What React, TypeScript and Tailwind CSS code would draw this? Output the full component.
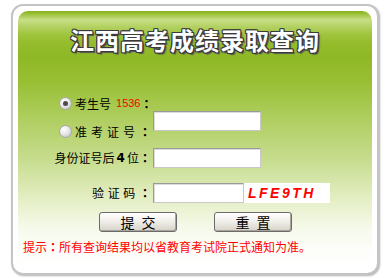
import React from "react";

function Radio({ checked }: { checked?: boolean }) {
  return (
    <span className="relative inline-flex h-[13px] w-[13px] shrink-0 items-center justify-center rounded-full border border-[#a8a8a8] bg-[radial-gradient(circle_at_35%_30%,#ffffff_0%,#e8e8e8_45%,#bdbdbd_100%)]">
      {checked && <span className="h-[5px] w-[5px] rounded-full bg-[#4a4a4a]" />}
    </span>
  );
}

function Colon({ bold = true }: { bold?: boolean }) {
  return (
    <span className={`shrink-0 font-['Noto_Sans_CJK_TC',sans-serif] leading-none ${bold ? "font-bold" : ""}`}>：</span>
  );
}

function Field({ w }: { w: string }) {
  return (
    <div
      className={`${w} h-[20px] shrink-0 border border-t-[#9a9a9a] border-l-[#9a9a9a] border-b-[#c8c8c8] border-r-[#c8c8c8] bg-white shadow-[inset_1px_1px_0_#dcdcdc]`}
    />
  );
}

function Btn({ label }: { label: string }) {
  return (
    <button className="flex h-[20px] w-[78px] items-center justify-center rounded-[3px] border border-[#6b6b6b] bg-[linear-gradient(#ffffff,#f1efea_45%,#d6d2c8)] pl-[7px] text-[14px] leading-none tracking-[7px] text-black shadow-[inset_-1px_-1px_0_#a9a59b]">
      {label}
    </button>
  );
}

export default function App() {
  return (
    <div className="h-[278px] w-[385px] bg-white pt-[4px] pl-[11px] font-['Noto_Sans_CJK_SC',sans-serif] text-[12px] text-black">
      <div className="h-[271px] w-[368px] rounded-[12px] border-2 border-[#c4c4c4] bg-white p-[5px] shadow-[1px_1px_2px_#b0b0b0]">
        <div className="flex h-full flex-col rounded-t-[10px] rounded-b-[8px] bg-[linear-gradient(180deg,#86b019_0px,#9cc23a_3px,#c8df88_9px,#b2d060_16px,#9fc43c_24px,#94bc2c_32px,#8fb826_46px,#98bf33_70px,#b0cf62_110px,#c8dd90_150px,#e2edc0_185px,#f5f9e8_215px,#fdfefa_240px,#ffffff_255px)]">
          <div className="flex h-[52px] items-start justify-center pt-[15px]">
            <div className="whitespace-nowrap text-[24px] font-bold leading-[28px] tracking-[1px] text-white [text-shadow:1px_1px_0_#3a3a3a,-1px_-1px_0_#3a3a3a,1px_-1px_0_#3a3a3a,-1px_1px_0_#3a3a3a,0_1px_0_#3a3a3a,0_-1px_0_#3a3a3a,1px_0_0_#3a3a3a,-1px_0_0_#3a3a3a,2px_2px_1px_#555]">
              江西高考成绩录取查询
            </div>
          </div>

          <div className="ml-[37px] mt-[26.5px] flex">
            <div className="flex w-[96px] shrink-0 flex-col">
              <div className="flex h-[28px] items-center whitespace-nowrap pl-[4px]">
                <Radio checked />
                <span className="ml-[3px] shrink-0 leading-none">考生号</span>
                <span className="ml-[5px] shrink-0 font-['Liberation_Sans',sans-serif] text-[11px] leading-none text-[#ff0000]">1536</span>
                <span className="ml-auto flex"><Colon /></span>
              </div>
              <div className="flex h-[28px] items-center whitespace-nowrap pl-[4px]">
                <Radio />
                <span className="ml-[3px] flex flex-1 justify-between leading-none">
                  <span>准</span>
                  <span>考</span>
                  <span>证</span>
                  <span>号</span>
                  <Colon />
                </span>
              </div>
            </div>
            <div className="ml-[2px] pt-[21px]">
              <Field w="w-[108px]" />
            </div>
          </div>

          <div className="ml-[37px] mt-[2px] flex h-[20px] items-center">
            <div className="flex w-[96px] shrink-0 items-center justify-end whitespace-nowrap leading-none">
              <span className="shrink-0">身份证号后</span>
              <span className="mx-[2px] shrink-0 font-['DejaVu_Sans',sans-serif] font-bold">4</span>
              <span className="shrink-0">位</span>
              <Colon />
            </div>
            <div className="ml-[2px]">
              <Field w="w-[108px]" />
            </div>
          </div>

          <div className="ml-[37px] mt-[15.5px] flex h-[20px] items-center">
            <div className="flex w-[96px] shrink-0 justify-end">
              <span className="flex w-[59px] justify-between whitespace-nowrap leading-none">
                <span>验</span>
                <span>证</span>
                <span>码</span>
                <Colon />
              </span>
            </div>
            <div className="ml-[2px] flex">
              <Field w="w-[91px]" />
              <div className="flex h-[20px] w-[86px] items-center whitespace-nowrap bg-white pl-[4px] font-['Liberation_Sans',sans-serif] text-[14px] font-bold italic tracking-[2.5px] text-[#ff0000]">
                LFE9TH
              </div>
            </div>
          </div>

          <div className="ml-[81px] mt-[9px] flex gap-[37px]">
            <Btn label="提交" />
            <Btn label="重置" />
          </div>

          <div className="ml-[5px] mt-[7px] flex h-[16px] items-center whitespace-nowrap text-[12px] leading-[16px] text-[#ff0000]">
            <span>提示</span>
            <Colon />
            <span>所有查询结果均以省教育考试院正式通知为准。</span>
          </div>
        </div>
      </div>
    </div>
  );
}
